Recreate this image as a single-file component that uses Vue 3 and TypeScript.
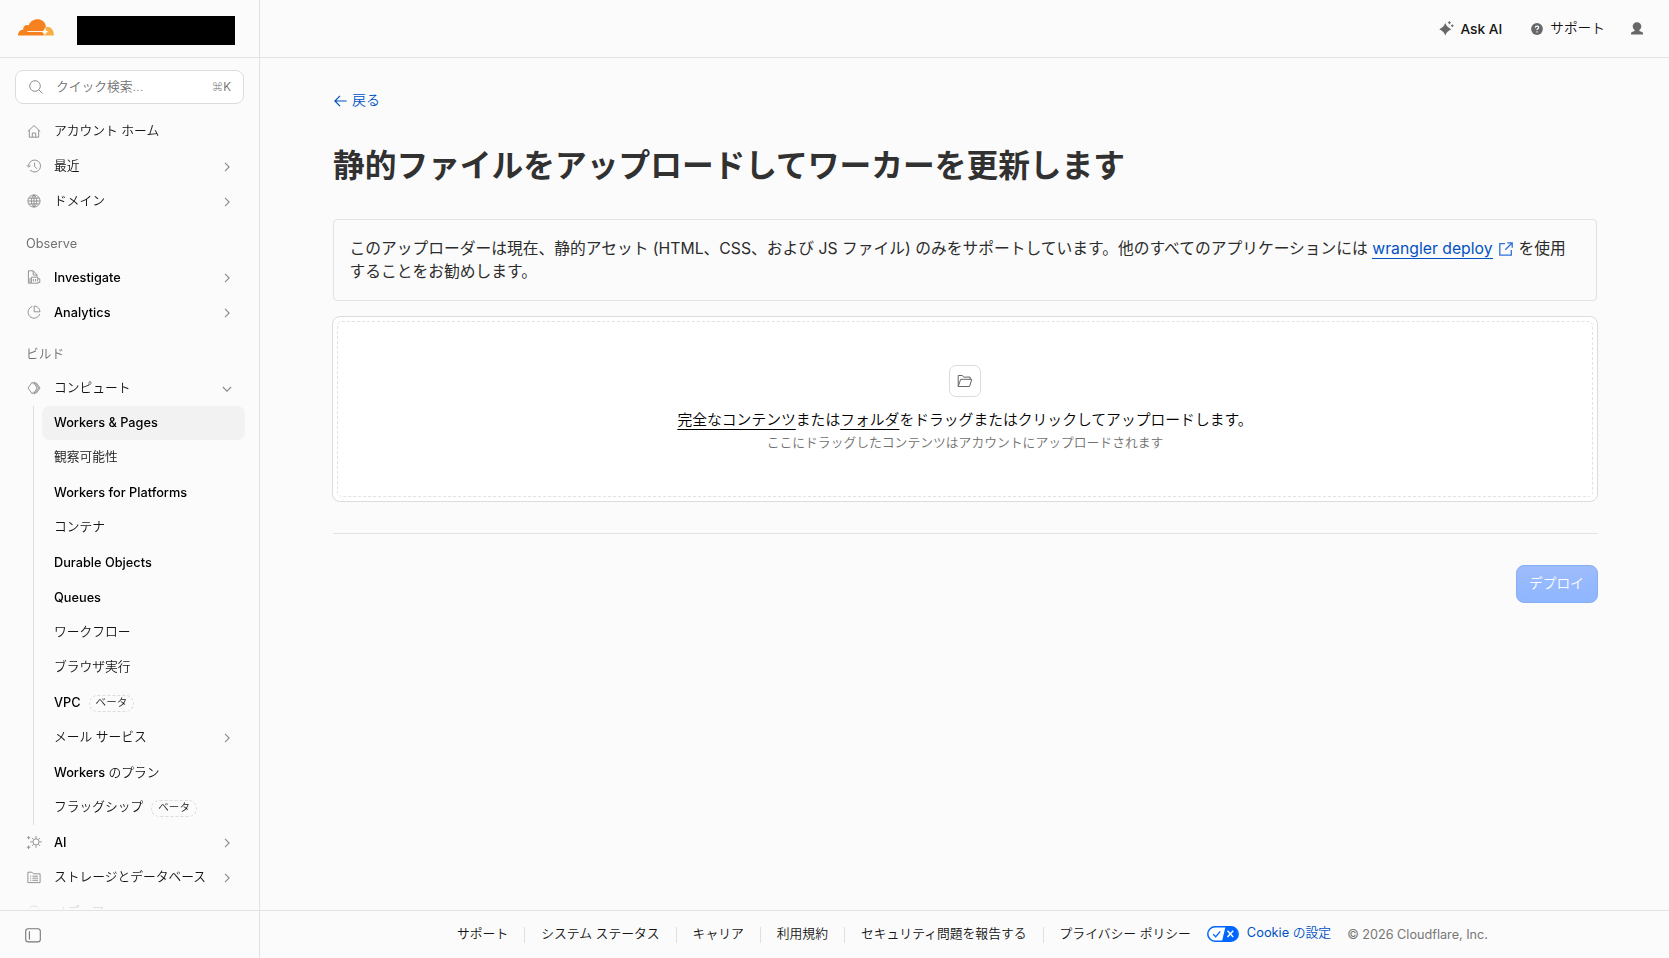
<script setup lang="ts">
interface NavItem {
  label: string
  icon?: string
  chevron?: 'right' | 'down'
  beta?: boolean
  active?: boolean
}

const topItems: NavItem[] = [
  { label: 'アカウント ホーム', icon: 'home' },
  { label: '最近', icon: 'recent', chevron: 'right' },
  { label: 'ドメイン', icon: 'globe', chevron: 'right' },
]

const observeItems: NavItem[] = [
  { label: 'Investigate', icon: 'investigate', chevron: 'right' },
  { label: 'Analytics', icon: 'analytics', chevron: 'right' },
]

const computeItem: NavItem[] = [{ label: 'コンピュート', icon: 'compute', chevron: 'down' }]

const computeChildren: NavItem[] = [
  { label: 'Workers & Pages', active: true },
  { label: '観察可能性' },
  { label: 'Workers for Platforms' },
  { label: 'コンテナ' },
  { label: 'Durable Objects' },
  { label: 'Queues' },
  { label: 'ワークフロー' },
  { label: 'ブラウザ実行' },
  { label: 'VPC', beta: true },
  { label: 'メール サービス', chevron: 'right' },
  { label: 'Workers のプラン' },
  { label: 'フラッグシップ', beta: true },
]

const tailItems: NavItem[] = [
  { label: 'AI', icon: 'ai', chevron: 'right' },
  { label: 'ストレージとデータベース', icon: 'storage', chevron: 'right' },
  { label: 'メディア', icon: 'media' },
]

const groups = [
  { title: '', items: topItems, children: [] as NavItem[] },
  { title: 'Observe', items: observeItems, children: [] as NavItem[] },
  { title: 'ビルド', items: computeItem, children: computeChildren },
  { title: '', items: tailItems, children: [] as NavItem[] },
]

// Splits a label so that Latin words can carry more weight than the Japanese around them.
const runs = (label: string): string[] => label.match(/[\x00-\x7f]+|[^\x00-\x7f]+/g) ?? []
const isLatin = (text: string): boolean => /[A-Za-z]/.test(text)

const icons: Record<string, string[]> = {
  home: ['M.8 7.4 7 1.6l6.2 5.8', 'M2.3 6.2v7h9.4v-7', 'M5.3 13.2V9h3.4v4.2'],
  recent: ['M1.6 7.6A6 6 0 1 1 3 10.9', 'M-.2 6.2l1.800 1.900 1.800-1.600', 'M7.6 3.6V7.4l2.300 2.400'],
  globe: [
    'M7 .9a6.1 6.1 0 1 0 0 12.2A6.1 6.1 0 0 0 7 .9z',
    'M7 .9C3.4 4 3.4 10 7 13.1 10.6 10 10.6 4 7 .9z',
    'M7 .9v12.2M1 7h12M1.8 4.1h10.4M1.8 9.9h10.4',
  ],
  investigate: ['M4 13.2H1.400V.8h4.800l3.800 4v2', 'M6.2.8V5H10', 'M4.400 7.200h6.400v1.600h2v3.600h-1.800v.8H4.400z', 'M6.300 9v2.400M8.400 9v2.400M10.400 9v2.400M3 8v5'],
  analytics: ['M5.4 1.4A6 6 0 1 0 12.8 9', 'M7.2 1v5.8h5.8A5.8 5.8 0 0 0 7.2 1z'],
  compute: ['M5.200 1.200 1 7l4.200 5.800', 'M5.200 1.200 6.800 3.400M5.200 12.800l1.600-2.200', 'M6.800 1.200h1L11.600 7l-3.800 5.800h-1', 'M6.800 1.200 10 7l-3.200 5.800', 'M9.200 1.600 13 7l-3.800 5.400'],
  ai: [
    'M9 3.8a3.1 3.1 0 1 0 0 6.2 3.1 3.1 0 0 0 0-6.2z',
    'M9 1v2.400M9 10.400v2.400M3.200 6.900h2.400M12.400 6.900h2.400M5 2.900l1.500 1.500M11.500 9.400l1.500 1.500M13 2.900l-1.500 1.500M5 10.900l1.500-1.500',
    'M1.6 1.2v3M.1 2.7h3M1.6 10.4v3.6M-.2 12.2h3.6',
  ],
  storage: ['M.9 12.6V2.2h4.2l1.4 1.6h6.6v8.800z', 'M3.2 6.2h1M5.4 6.2h5.6M3.2 8.2h1M5.4 8.2h5.6M3.2 10.3h1M5.4 10.3h5.6'],
  media: ['M7 1a6 6 0 1 0 0 12A6 6 0 0 0 7 1z', 'M5.6 4.6v4.8L9.6 7z'],
}

const footerLinks = ['サポート', 'システム ステータス', 'キャリア', '利用規約', 'セキュリティ問題を報告する', 'プライバシー ポリシー']
</script>

<template>
  <div class="app">
    <aside class="sidebar">
      <div class="brand">
        <svg class="logo" viewBox="0 0 36 17" width="36" height="17">
          <path d="M0 16.400C-.2 13 2.200 10.600 5.200 10.400 4.900 7.200 7.800 5 10.600 6.400 12.300 2 16.400-.3 20.600.3c4.200.6 7 3.600 7.300 7.400L25 16.400z" fill="#f6821f" />
          <path d="M28.600 7.700c4.300-.2 7.500 3.400 7.200 8.700H24.500z" fill="#fbad41" />
          <path d="M9.500 12.500h14.500" stroke="#fff" stroke-width=".9" fill="none" />
          <path d="M27 8.200c.2 3.200 1.400 4.200 3.700 4.500-2.400.5-3.500 1.600-3.700 4-.5-2.400-1.800-3.500-4.600-4 3-.4 4.200-1.600 4.600-4.500z" fill="#fff" />
        </svg>
        <div class="account"></div>
      </div>

      <div class="nav-wrap">
        <div class="search">
          <svg class="search-icon" width="14" height="14" viewBox="0 0 14 14"><circle cx="6" cy="6" r="5.300" /><path d="M9.900 9.900l3.700 3.700" /></svg>
          <span class="search-text">クイック検索...</span>
          <span class="shortcut"><i>⌘</i>K</span>
        </div>

        <nav class="nav">
          <section v-for="(group, g) in groups" :key="g" class="group">
            <h2 v-if="group.title" class="group-title" :class="{ roman: isLatin(group.title) }">{{ group.title }}</h2>
            <a v-for="item in group.items" :key="item.label" class="row">
              <svg class="icon" width="14" height="14" viewBox="0 0 14 14">
                <path v-for="d in icons[item.icon ?? 'home']" :key="d" :d="d" />
              </svg>
              <span class="label" :class="{ roman: isLatin(item.label) }"><span v-for="run in runs(item.label)" :key="run" :class="{ latin: isLatin(run) }">{{ run }}</span></span>
              <svg v-if="item.chevron" class="chevron" :class="item.chevron" width="10" height="10" viewBox="0 0 10 10"><path d="M3 .9 7.100 5 3 9.100" /></svg>
            </a>
            <div v-if="group.children.length" class="children">
              <a v-for="child in group.children" :key="child.label" class="row child" :class="{ active: child.active }">
                <span class="label" :class="{ roman: isLatin(child.label) && !child.active }"><span v-for="run in runs(child.label)" :key="run" :class="{ latin: isLatin(run) }">{{ run }}</span></span>
                <span v-if="child.beta" class="beta">ベータ</span>
                <svg v-if="child.chevron" class="chevron" :class="child.chevron" width="10" height="10" viewBox="0 0 10 10"><path d="M3 .9 7.100 5 3 9.100" /></svg>
              </a>
            </div>
          </section>
        </nav>
      </div>

      <div class="sidebar-foot">
        <svg width="16" height="15" viewBox="0 0 16 15"><rect x=".7" y=".7" width="14.600" height="13.200" rx="2.500" /><path d="M4.400 3.200v8.200" /></svg>
      </div>
    </aside>

    <div class="page">
      <header class="topbar">
        <a class="top-link ask">
          <svg width="15" height="15" viewBox="0 0 15 15">
            <path d="M6.300 2c1.300 3.300 2.800 4.600 6 6.200-3.200 1.500-4.700 2.900-6 6.200C5 11.100 3.500 9.700.3 8.200 3.500 6.600 5 5.300 6.300 2z" />
            <path d="M10.400.2v3M8.900 1.700h3M13.300 3.400v2.600M12 4.700h2.600" class="line" />
          </svg>
          <span>Ask AI</span>
        </a>
        <a class="top-link help">
          <svg width="12" height="12" viewBox="0 0 12 12">
            <circle cx="6" cy="6" r="5.900" />
            <path d="M4.300 4.700C4.400 2.500 7.700 2.600 7.700 4.600 7.700 5.800 6 5.800 6 7.100M6 8.300v1.200" class="mark" />
          </svg>
          <span>サポート</span>
        </a>
        <a class="top-link user">
          <svg width="12" height="13" viewBox="0 0 12 13"><path d="M6 .2c2.500 0 4.300 1.700 4.300 4.100 0 1.600-.8 2.900-1.900 3.700v1l2.600 1.100c.6.300 1 .8 1 1.400v1H0v-1c0-.6.400-1.100 1-1.400L3.600 9V8C2.500 7.200 1.700 5.900 1.700 4.300 1.700 1.900 3.500.2 6 .2z" /></svg>
        </a>
      </header>

      <main class="content">
        <a class="back">
          <svg width="13" height="12" viewBox="0 0 13 12"><path d="M12.700 6H1M6 .8.900 6 6 11.200" /></svg>
          <span>戻る</span>
        </a>
        <h1 class="title">静的ファイルをアップロードしてワーカーを更新します</h1>

        <div class="notice">このアップローダーは現在、静的アセット (HTML、CSS、および JS ファイル) のみをサポートしています。他のすべてのアプリケーションには <a class="doc-link">wrangler deploy</a><svg class="external" width="14" height="14" viewBox="0 0 14 14"><path d="M6 1.700H.8v11.500h11.500V8M8.300.8h4.900v4.900M13 1 6.300 7.700" /></svg>を使用<br />することをお勧めします。</div>

        <div class="dropzone">
          <div class="drop-inner">
            <div class="folder">
              <svg width="16" height="14" viewBox="0 0 16 14"><path d="M1.200 12.500V1.500h4.200l1.300 1.600h6.500v2.200M1.200 12.500 3.700 5.300h11.100l-2.300 7.200z" /></svg>
            </div>
            <p class="drop-text"><u>完全なコンテンツ</u>または<u>フォルダ</u>をドラッグまたはクリックしてアップロードします。</p>
            <p class="drop-sub">ここにドラッグしたコンテンツはアカウントにアップロードされます</p>
          </div>
        </div>

        <div class="actions">
          <button class="deploy" disabled>デプロイ</button>
        </div>
      </main>

      <footer class="footer">
        <a v-for="link in footerLinks" :key="link" class="foot-link">{{ link }}</a>
        <a class="cookie">
          <svg width="32" height="16" viewBox="0 0 32 16">
            <rect x=".8" y=".8" width="30.400" height="14.400" rx="7.200" fill="#fff" />
            <path d="M18.500.8h5.300a7.200 7.200 0 0 1 0 14.400h-8.800z" fill="#06f" />
            <rect x=".8" y=".8" width="30.400" height="14.400" rx="7.200" fill="none" stroke="#06f" stroke-width="1.500" />
            <path d="M6.200 8.200l2.500 2.500 4.600-5.300" fill="none" stroke="#06f" stroke-width="1.300" />
            <path d="M20.500 4.800l5.700 6.200M26.200 4.800 20.500 11" fill="none" stroke="#fff" stroke-width="1.500" />
          </svg>
          <span><b>Cookie</b> の設定</span>
        </a>
        <span class="copyright">© 2026 Cloudflare, Inc.</span>
      </footer>
    </div>
  </div>
</template>

<style>
body {
  margin: 0;
  background: #fbfbfb;
}
</style>

<style scoped>
.app {
  display: flex;
  height: 958px;
  overflow: hidden;
  background: #fbfbfb;
  color: #141414;
  font-family: Inter, 'Noto Sans CJK JP', sans-serif;
  font-size: 12.75px;
  font-weight: 350;
}
.app * {
  box-sizing: border-box;
}
b {
  font-weight: 400;
}
svg {
  display: block;
  flex: none;
}
.sidebar {
  display: flex;
  flex-direction: column;
  width: 260px;
  flex: none;
  border-right: 1px solid #e2e2e2;
}
.brand {
  display: flex;
  align-items: center;
  height: 58px;
  flex: none;
  padding: 2px 0 0 18px;
  border-bottom: 1px solid #e2e2e2;
}
.logo {
  margin-top: -4px;
}
.account {
  width: 158px;
  height: 29px;
  margin: 2px 0 0 23px;
  background: #000;
}
.nav-wrap {
  flex: 1;
  min-height: 0;
  overflow: hidden;
  padding: 12px 15px 0;
  -webkit-mask-image: linear-gradient(#000 calc(100% - 16px), transparent);
  mask-image: linear-gradient(#000 calc(100% - 16px), transparent);
}
.search {
  display: flex;
  align-items: center;
  height: 34px;
  padding: 0 12px 0 13px;
  border: 1px solid #dcdcdc;
  border-radius: 8px;
  background: #fff;
  color: #707070;
}
.search-icon {
  margin-top: -1px;
  fill: none;
  stroke: #8f8f8f;
  stroke-width: 1;
}
.search-text {
  margin: -3px 0 0 13px;
}
.shortcut {
  margin: -2px 0 0 auto;
  font-size: 12px;
  color: #555;
}
.shortcut i {
  font-style: normal;
  font-size: 11.5px;
  color: #999;
}
.nav {
  padding-top: 10px;
}
.group-title {
  height: 32px;
  margin: 9px 0 0 11px;
  font-size: 12.75px;
  line-height: 30px;
  font-weight: 350;
  color: #707070;
}
.group-title.roman {
  font-weight: 400;
  line-height: 32px;
}
.row {
  display: flex;
  align-items: center;
  height: 35px;
  padding: 0 12px 0 12px;
}
.icon {
  overflow: visible;
  margin-top: -1px;
  fill: none;
  stroke: #888;
  stroke-width: 0.9;
}
.icon + .label {
  margin-left: 13px;
}
.label {
  margin-top: -1px;
  line-height: 20px;
  white-space: pre;
}
.label.roman {
  margin-top: 1px;
}
.latin {
  font-weight: 480;
  color: #000;
}
.chevron {
  margin-left: auto;
  fill: none;
  stroke: #888;
  stroke-width: 1.1;
}
.chevron.down {
  transform: rotate(90deg);
}
.children {
  margin-left: 18px;
  padding-left: 8px;
  border-left: 1px solid #dfdfdf;
}
.child {
  height: 35px;
  padding: 0 12px;
  margin-right: -1px;
  border-radius: 8px;
}
.child .chevron {
  margin-right: 1px;
}
.child.active {
  height: 34px;
  background: #f2f2f2;
}
.beta {
  height: 17px;
  margin-left: 8px;
  margin-top: 2px;
  padding: 0 6px;
  border: 1px dashed #dcdcdc;
  border-radius: 9px;
  font-size: 10.6px;
  line-height: 14px;
}
.sidebar-foot {
  display: flex;
  align-items: center;
  flex: none;
  height: 48px;
  padding-left: 25px;
  border-top: 1px solid #e2e2e2;
}
.sidebar-foot svg {
  margin-top: 1px;
  fill: none;
  stroke: #777;
  stroke-width: 1.1;
}
.page {
  display: flex;
  flex: 1;
  min-width: 0;
  flex-direction: column;
}
.topbar {
  display: flex;
  align-items: center;
  justify-content: flex-end;
  height: 58px;
  flex: none;
  padding: 0 26px 0 0;
  border-bottom: 1px solid #e2e2e2;
  font-size: 13.7px;
}
.top-link {
  display: flex;
  align-items: center;
}
.top-link svg {
  fill: #686868;
}
.top-link .line {
  fill: none;
  stroke: #686868;
}
.top-link .mark {
  fill: none;
  stroke: #fff;
  stroke-width: 1.2;
}
.ask {
  font-weight: 500;
}
.ask span {
  margin-left: 6px;
}
.help {
  margin-left: 29px;
}
.help span {
  margin: -3px 0 0 7px;
}
.user {
  margin-left: 26px;
}
.content {
  flex: 1;
  padding: 32px 72px 0 73px;
}
.back {
  display: flex;
  align-items: center;
  height: 22px;
  padding-left: 1px;
  font-size: 14px;
  color: #0051c3;
}
.back svg {
  fill: none;
  stroke: #0051c3;
  stroke-width: 1.2;
}
.back span {
  margin: -4px 0 0 5px;
}
.title {
  height: 48px;
  margin: 30px 0 0;
  font-size: 31.72px;
  line-height: 48px;
  font-weight: 600;
  color: #313131;
  white-space: nowrap;
}
.notice {
  height: 82px;
  margin-top: 29px;
  padding: 17px 15.5px;
  border: 1px solid #e2e2e2;
  border-radius: 4px;
  font-size: 15.75px;
  line-height: 23.4px;
  font-weight: 370;
  color: #2c2c2c;
  white-space: nowrap;
}
.doc-link {
  color: #0051c3;
  font-weight: 400;
  border-bottom: 1px solid #0051c3;
}
.external {
  display: inline-block;
  margin: 0 6px;
  vertical-align: -2px;
  fill: none;
  stroke: #2c70d8;
  stroke-width: 1.3;
}
.dropzone {
  height: 186px;
  margin: 15px -1px 0;
  padding: 4px;
  border: 1px solid #dcdcdc;
  border-radius: 8px;
  background: #fff;
}
.drop-inner {
  display: flex;
  flex-direction: column;
  align-items: center;
  height: 100%;
  padding-top: 43px;
  border: 1px dashed #e2e2e2;
  border-radius: 5px;
}
.folder {
  display: flex;
  align-items: center;
  justify-content: center;
  width: 32px;
  height: 32px;
  border: 1px solid #dcdcdc;
  border-radius: 7px;
}
.folder svg {
  fill: none;
  stroke: #666;
}
.drop-text {
  margin: 11px 0 0;
  font-size: 14.8px;
  line-height: 24px;
  color: #000;
  white-space: nowrap;
}
.drop-text u {
  text-decoration-thickness: 1px;
  text-underline-offset: 4px;
}
.drop-sub {
  margin: 0;
  font-size: 12.8px;
  line-height: 22px;
  color: #707070;
  white-space: nowrap;
}
.actions {
  display: flex;
  justify-content: flex-end;
  margin: 31px -1px 0 0;
  padding-top: 31px;
  border-top: 1px solid #e2e2e2;
}
.deploy {
  width: 82px;
  height: 38px;
  padding: 0 1px 5px 0;
  border: 1px solid #86aef2;
  border-radius: 8px;
  background: linear-gradient(#9dbcfc, #8fb6ff);
  font: inherit;
  font-size: 13.7px;
  color: #fff;
}
.footer {
  display: flex;
  align-items: center;
  flex: none;
  height: 48px;
  padding-left: 181px;
  border-top: 1px solid #e2e2e2;
  font-size: 12.8px;
  white-space: nowrap;
}
.foot-link {
  height: 16px;
  padding: 0 16px;
  border-right: 1px solid #e0e0e0;
  line-height: 14px;
}
.foot-link:nth-of-type(6) {
  border-right: 0;
}
.cookie {
  display: flex;
  align-items: center;
  color: #0051c3;
}
.cookie svg {
  margin-top: -1px;
}
.cookie span {
  margin: -6px 0 0 8px;
}
.copyright {
  margin-left: 16px;
  font-weight: 400;
  font-size: 12.67px;
  color: #777;
}
</style>
